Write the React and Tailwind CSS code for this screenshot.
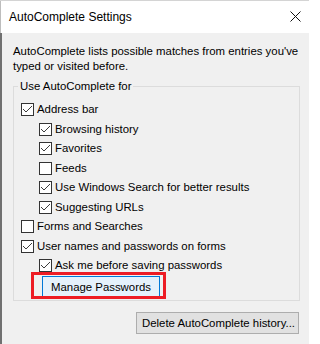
import React from "react";

const Check = ({ checked }) => (
  <span className="w-[13px] h-[13px] border border-[#333333] bg-white flex items-center justify-center shrink-0">
    {checked && (
      <svg width="11" height="11" viewBox="0 0 11 11">
        <path d="M1 5 L4 8 L10 2" fill="none" stroke="#3c3c3c" strokeWidth="1" />
      </svg>
    )}
  </span>
);

const Row = ({ checked, label, indent }) => (
  <div className={"h-[19.5px] flex items-center gap-[3px] " + (indent ? "pl-[18px]" : "")}>
    <Check checked={checked} />
    <span className="leading-[15px] whitespace-nowrap">{label}</span>
  </div>
);

export default function App() {
  return (
    <div className="w-[309px] h-[344px] overflow-hidden bg-[#f0f0f0] text-[11.4px] text-black font-['Liberation_Sans',Arial,sans-serif] border-t border-[#d4d4d4] flex flex-col">
      <div className="h-[32px] bg-white border-l border-[#bdbdbd] flex items-center justify-between pl-[8px] pr-[8px] shrink-0">
        <span className="leading-[15px] mt-[1px] text-[12px]">AutoComplete Settings</span>
        <svg width="11" height="11" viewBox="0 0 11 11" className="mb-[2px]">
          <path d="M0.5 0.5 L10.5 10.5 M10.5 0.5 L0.5 10.5" stroke="#111" strokeWidth="1" />
        </svg>
      </div>
      <div className="flex-1 border-l-2 border-[#707070] flex flex-col">
        <p className="mt-[11px] ml-[11px] leading-[15px] whitespace-nowrap">
          AutoComplete lists possible matches from entries you've
          <br />
          typed or visited before.
        </p>
        <fieldset className="ml-[11px] mt-[5px] w-[287px] h-[222px] border border-[#dcdcdc] p-0 m-0">
          <legend className="ml-[4px] px-[2px] leading-[15px]">Use AutoComplete for</legend>
          <div className="pt-[6px] pl-[7px] flex flex-col">
            <Row checked label="Address bar" />
            <Row checked indent label="Browsing history" />
            <Row checked indent label="Favorites" />
            <Row indent label="Feeds" />
            <Row checked indent label="Use Windows Search for better results" />
            <Row checked indent label="Suggesting URLs" />
            <Row label="Forms and Searches" />
            <Row checked label="User names and passwords on forms" />
            <Row checked indent label="Ask me before saving passwords" />
            <div className="-mt-[3.5px] ml-[10px] w-[135px] h-[27px] border-[3px] border-[#ed1c24] overflow-hidden pl-[8px] pt-[1px]">
              <div className="w-[118px] h-[23px] border border-[#0078d7] bg-[#e5f1fb] flex items-center justify-center leading-[15px] whitespace-nowrap">
                Manage Passwords
              </div>
            </div>
          </div>
        </fieldset>
        <div className="flex justify-end pr-[10px] mt-[11px]">
          <div className="w-[163px] h-[22px] border border-[#adadad] bg-[#e1e1e1] flex items-center pl-[5px] leading-[15px] whitespace-nowrap">
            Delete AutoComplete history...
          </div>
        </div>
      </div>
    </div>
  );
}
